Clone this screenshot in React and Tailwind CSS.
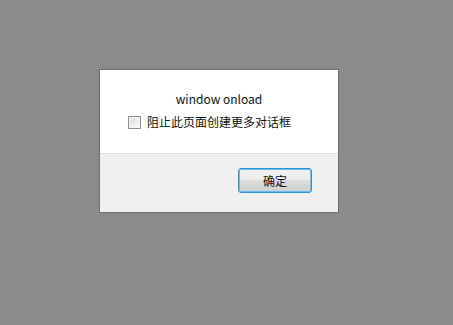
import React from "react";

const font = { fontFamily: '"Noto Sans CJK SC", "Liberation Sans", sans-serif' };

const App = () => {
  return (
    <div className="min-h-screen w-full bg-[#8b8b8b] pt-[69px] pl-[99px]" style={font}>
      {/* alert dialog */}
      <div className="w-[240px] h-[144px] border border-[#6f6f6f] bg-white flex flex-col">
        <div className="h-[83px] pt-[21px] flex flex-col">
          <div className="text-center text-[12px] leading-[16px] text-[#111]">window onload</div>
          <label className="mt-[7px] flex items-center pl-[28px] text-[12px] leading-[16px] text-[#111]">
            <span className="w-[13px] h-[13px] border border-[#8e8f8f] bg-gradient-to-br from-[#dcdcdc] to-[#fbfbfb] shadow-[inset_0_0_0_1px_#f4f4f4]" />
            <span className="ml-[6px]">阻止此页面创建更多对话框</span>
          </label>
        </div>
        <div className="flex-1 bg-[#f0f0f0] border-t border-[#dfdfdf] flex justify-end items-start pt-[14px] pr-[26px]">
          <button className="w-[74px] h-[25px] rounded-[3px] border border-[#2f94d6] shadow-[inset_0_0_0_1px_#5ec2f0] bg-[linear-gradient(#f2f2f2_0%,#ebebeb_50%,#dddddd_50%,#cfcfcf_100%)] text-[12px] leading-[16px] text-[#111]">
            确定
          </button>
        </div>
      </div>
    </div>
  );
};

export default App;
